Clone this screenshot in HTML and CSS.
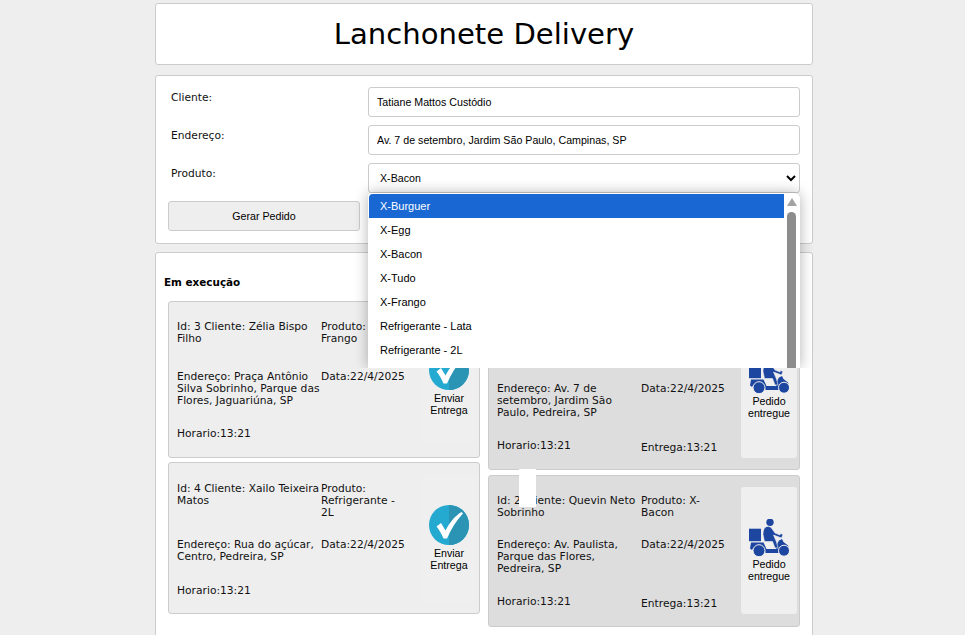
FILE: index.html
```html
<!DOCTYPE html>
<html lang="pt-BR">
<head>
  <meta charset="UTF-8">
  <meta name="viewport" content="width=device-width, initial-scale=1.0">
  <title>Lanchonete Delivery</title>
  <link rel="stylesheet" href="styles.css">
</head>
<body>
  <div class="page">
    <header class="box title-box">
      <h1>Lanchonete Delivery</h1>
    </header>

    <form class="box order-form">
      <label for="cliente">Cliente:</label>
      <input type="text" id="cliente" value="Tatiane Mattos Custódio">

      <label for="endereco">Endereço:</label>
      <input type="text" id="endereco" value="Av. 7 de setembro, Jardim São Paulo, Campinas, SP">

      <label for="produto">Produto:</label>
      <div class="select-wrap">
        <select id="produto">
          <option>X-Bacon</option>
        </select>
        <div class="dropdown">
          <ul class="dropdown-list">
            <li class="selected">X-Burguer</li>
            <li>X-Egg</li>
            <li>X-Bacon</li>
            <li>X-Tudo</li>
            <li>X-Frango</li>
            <li>Refrigerante - Lata</li>
            <li>Refrigerante - 2L</li>
          </ul>
          <div class="dropdown-scroll">
            <span class="scroll-up"></span>
            <span class="scroll-thumb"></span>
          </div>
        </div>
      </div>

      <button type="button" class="btn-order">Gerar Pedido</button>
    </form>

    <section class="box orders">
      <h2>Em execução</h2>
      <div class="columns">
        <div class="col col-left">
          <article class="card card-first">
            <div class="info">
              <p class="top-tall">Id: 3 Cliente: Zélia Bispo Filho</p>
              <p class="top-tall">Produto: X-Frango</p>
              <p>Endereço: Praça Antônio Silva Sobrinho, Parque das Flores, Jaguariúna, SP</p>
              <p>Data:22/4/2025</p>
              <p>Horario:13:21</p>
            </div>
            <button type="button" class="action action-low">
              <svg class="icon-check" viewBox="0 0 40 40">
                <circle cx="20" cy="20" r="20" fill="#24a9d0"/>
                <path d="M20 0a20 20 0 0 1 0 40z" fill="#2b94b4"/>
                <path d="M7.5 21.5l4.5-3.5 4.5 7.500C21 17 26 11 32.5 7l1.500 1.500C27 16 22 24 18 33.5h-3.500C12.5 29 10.5 25 7.500 21.500z" fill="#fff"/>
              </svg>
              Enviar Entrega
            </button>
          </article>

          <article class="card card-second">
            <div class="info">
              <p>Id: 4 Cliente: Xailo Teixeira Matos</p>
              <p>Produto: Refrigerante - 2L</p>
              <p>Endereço: Rua do açúcar, Centro, Pedreira, SP</p>
              <p>Data:22/4/2025</p>
              <p class="last-low">Horario:13:21</p>
            </div>
            <button type="button" class="action">
              <svg class="icon-check" viewBox="0 0 40 40">
                <circle cx="20" cy="20" r="20" fill="#24a9d0"/>
                <path d="M20 0a20 20 0 0 1 0 40z" fill="#2b94b4"/>
                <path d="M7.5 21.5l4.5-3.5 4.5 7.500C21 17 26 11 32.5 7l1.500 1.500C27 16 22 24 18 33.5h-3.500C12.5 29 10.5 25 7.500 21.500z" fill="#fff"/>
              </svg>
              Enviar Entrega
            </button>
          </article>
        </div>

        <div class="col col-right">
          <article class="card card-done card-short">
            <div class="info">
              <p>Id: 1 Cliente: Tatiane Mattos Custódio</p>
              <p>Produto: X-Tudo</p>
              <p>Endereço: Av. 7 de setembro, Jardim São Paulo, Pedreira, SP</p>
              <p>Data:22/4/2025</p>
              <p>Horario:13:21</p>
              <p class="delivered">Entrega:13:21</p>
            </div>
            <button type="button" class="action action-high">
              <svg class="icon-rider" viewBox="0 0 40 38">
                <rect x="0" y="9.700" width="12" height="12.500"/>
                <path d="M2 23.500h12.500l3 6.500h9.500c.5-3.500 1.500-6.500 3-8.500l3-1.500 1.500 3 4.500 3.500 1 4-4-1.500c-4 .5-6 2.500-6.500 5H16.500c-.5-4.500-3-7-6.500-7-3 0-5.500 1.500-7 4l-2-1.500z"/>
                <circle class="rider-wheel" cx="10" cy="31.700" r="6"/>
                <circle class="rider-wheel" cx="35" cy="31.700" r="5.500"/>
                <circle cx="21" cy="3.300" r="3.700"/>
                <path class="rider-body" d="M16 8.500c1.500-1.500 5-1.500 6.500 .5l3.500 5 5 2 .5-1.500 2.500 1-1.500 3.500-8-3 3 7 1.500 6h-3l-2.500-6.500h-8l-1.500-7c0-2.500 .5-5 2-7.500z"/>
              </svg>
              Pedido entregue
            </button>
          </article>

          <article class="card card-done">
            <div class="info">
              <p>Id: 2 Cliente: Quevin Neto Sobrinho</p>
              <p>Produto: X-Bacon</p>
              <p>Endereço: Av. Paulista, Parque das Flores, Pedreira, SP</p>
              <p>Data:22/4/2025</p>
              <p>Horario:13:21</p>
              <p class="delivered">Entrega:13:21</p>
            </div>
            <button type="button" class="action">
              <svg class="icon-rider" viewBox="0 0 40 38">
                <rect x="0" y="9.700" width="12" height="12.500"/>
                <path d="M2 23.500h12.500l3 6.500h9.500c.5-3.500 1.500-6.500 3-8.500l3-1.500 1.500 3 4.500 3.500 1 4-4-1.500c-4 .5-6 2.500-6.500 5H16.500c-.5-4.500-3-7-6.500-7-3 0-5.500 1.500-7 4l-2-1.500z"/>
                <circle class="rider-wheel" cx="10" cy="31.700" r="6"/>
                <circle class="rider-wheel" cx="35" cy="31.700" r="5.500"/>
                <circle cx="21" cy="3.300" r="3.700"/>
                <path class="rider-body" d="M16 8.500c1.500-1.500 5-1.500 6.500 .5l3.500 5 5 2 .5-1.500 2.500 1-1.500 3.500-8-3 3 7 1.500 6h-3l-2.500-6.500h-8l-1.500-7c0-2.500 .5-5 2-7.500z"/>
              </svg>
              Pedido entregue
            </button>
          </article>
          <div class="paint-glitch"></div>
        </div>
      </div>
    </section>
  </div>
</body>
</html>
```

FILE: styles.css
```css
html, body {
  height: 635px;
  overflow: hidden;
}
body {
  font-family: "DejaVu Sans", Verdana, sans-serif;
  font-size: 10.7px;
  margin: 0;
  background-color: #eee;
  color: #111;
}
.page {
  width: 658px;
  margin-left: 155px;
  padding-top: 3px;
}
.box {
  background: #fff;
  border: 1px solid #ccc;
  border-radius: 3px;
}

/* title */
.title-box {
  height: 60px;
  margin-bottom: 10px;
  display: flex;
  align-items: center;
  justify-content: center;
}
h1 {
  margin: 0 0 1px;
  font-size: 29.1px;
  font-weight: normal;
  color: #000;
}

/* form */
.order-form {
  display: grid;
  grid-template-columns: 200px 432px;
  row-gap: 8px;
  padding: 11px 12px 12px 12px;
  margin-bottom: 8px;
}
.order-form label {
  padding: 5px 0 0 3px;
  line-height: 12px;
}
input, select {
  width: 100%;
  height: 30px;
  box-sizing: border-box;
  border: 1px solid #ccc;
  border-radius: 3px;
  background: #fff;
  font-family: "Liberation Sans", Arial, sans-serif;
  font-size: 10.67px;
  color: #000;
}
input {
  padding: 0 8px;
}
select {
  padding: 0 7px;
  display: block;
}
.select-wrap {
  position: relative;
}
.btn-order {
  width: 192px;
  height: 30px;
  background-color: #eee;
  border: 1px solid #ccc;
  border-radius: 3px;
  font-family: "Liberation Sans", Arial, sans-serif;
  font-size: 10.67px;
  color: #000;
  grid-column: 1;
}

/* open select list */
.dropdown {
  position: absolute;
  z-index: 5;
  top: 30px;
  left: 0;
  width: 432px;
  height: 175px;
  display: flex;
  background: #fff;
  border-radius: 4px 6px 0 0;
  box-shadow: 0 0 14px rgba(0, 0, 0, 0.3);
  clip-path: inset(-20px -20px 0 -20px);
}
.dropdown-list {
  list-style: none;
  margin: 1px 0 0 1px;
  padding: 0;
  width: 415px;
  font-family: "Liberation Sans", Arial, sans-serif;
  font-size: 11px;
  color: #000;
}
.dropdown-list li {
  height: 24px;
  line-height: 24px;
  padding-left: 11px;
}
.dropdown-list li.selected {
  background-color: #1967d2;
  color: #fff;
  border-top-left-radius: 4px;
}
.dropdown-scroll {
  flex: 1;
  position: relative;
  display: flex;
  flex-direction: column;
  align-items: center;
  padding: 5px 1px 0 0;
}
.scroll-up {
  width: 0;
  height: 0;
  border-left: 5px solid transparent;
  border-right: 5px solid transparent;
  border-bottom: 8px solid #a3a3a3;
}
.scroll-thumb {
  flex: 1;
  width: 9px;
  margin-top: 6px;
  background-color: #8c8c8c;
  border-radius: 5px 5px 0 0;
}

/* orders */
.orders {
  height: 400px;
}
h2 {
  margin: 23px 0 13px 8px;
  font-size: 10.4px;
  line-height: 12px;
  color: #000;
}
.columns {
  display: flex;
  gap: 8px;
  padding: 0 12px;
}
.col {
  width: 312px;
  display: flex;
  flex-direction: column;
  position: relative;
}
.col-left {
  gap: 4px;
}
.col-right {
  gap: 5px;
  padding-top: 18px;
}
.card {
  display: flex;
  align-items: center;
  padding: 0 2px 0 8px;
  background-color: #eee;
  border: 1px solid #ccc;
  border-radius: 3px;
}
.card-done {
  background-color: #ddd;
}
.info {
  width: 244px;
  display: grid;
  grid-template-columns: 144px 88px;
  row-gap: 20px;
  padding: 19px 0 17px;
}
.card-second .info {
  padding: 20px 0 16px;
}
.card-done .info {
  padding-bottom: 16px;
}
.card-short .info {
  padding-bottom: 15px;
}
.info p {
  margin: 0;
  line-height: 12px;
}
.info p:nth-child(n+5) {
  margin-top: 1px;
}
.info p.top-tall {
  margin-bottom: 6px;
}
.info p.delivered {
  margin-top: 3px;
}
.info p.last-low {
  margin-top: 2px;
}
.action {
  width: 56px;
  height: 127px;
  box-sizing: border-box;
  padding: 0;
  display: flex;
  flex-direction: column;
  align-items: center;
  justify-content: center;
  border: none;
  border-radius: 3px;
  background-color: #efefef;
  font-family: "Liberation Sans", Arial, sans-serif;
  font-size: 10.67px;
  line-height: 12px;
  color: #000;
  text-align: center;
}
.card-done .action {
  margin-bottom: 1px;
}
.action-low {
  padding-top: 6px;
}
.action-high {
  padding-bottom: 13px;
}
.icon-check {
  width: 40px;
  height: 40px;
  margin-bottom: 2px;
}
.icon-rider {
  width: 40px;
  height: 38px;
  margin-bottom: 1px;
  fill: #1d46a0;
}
.rider-wheel {
  stroke: #efefef;
  stroke-width: 1;
}
.rider-body {
  stroke: #efefef;
  stroke-width: 0.6;
}
.paint-glitch {
  position: absolute;
  top: 168px;
  left: 31px;
  width: 17px;
  height: 38px;
  background: #fff;
}
```
